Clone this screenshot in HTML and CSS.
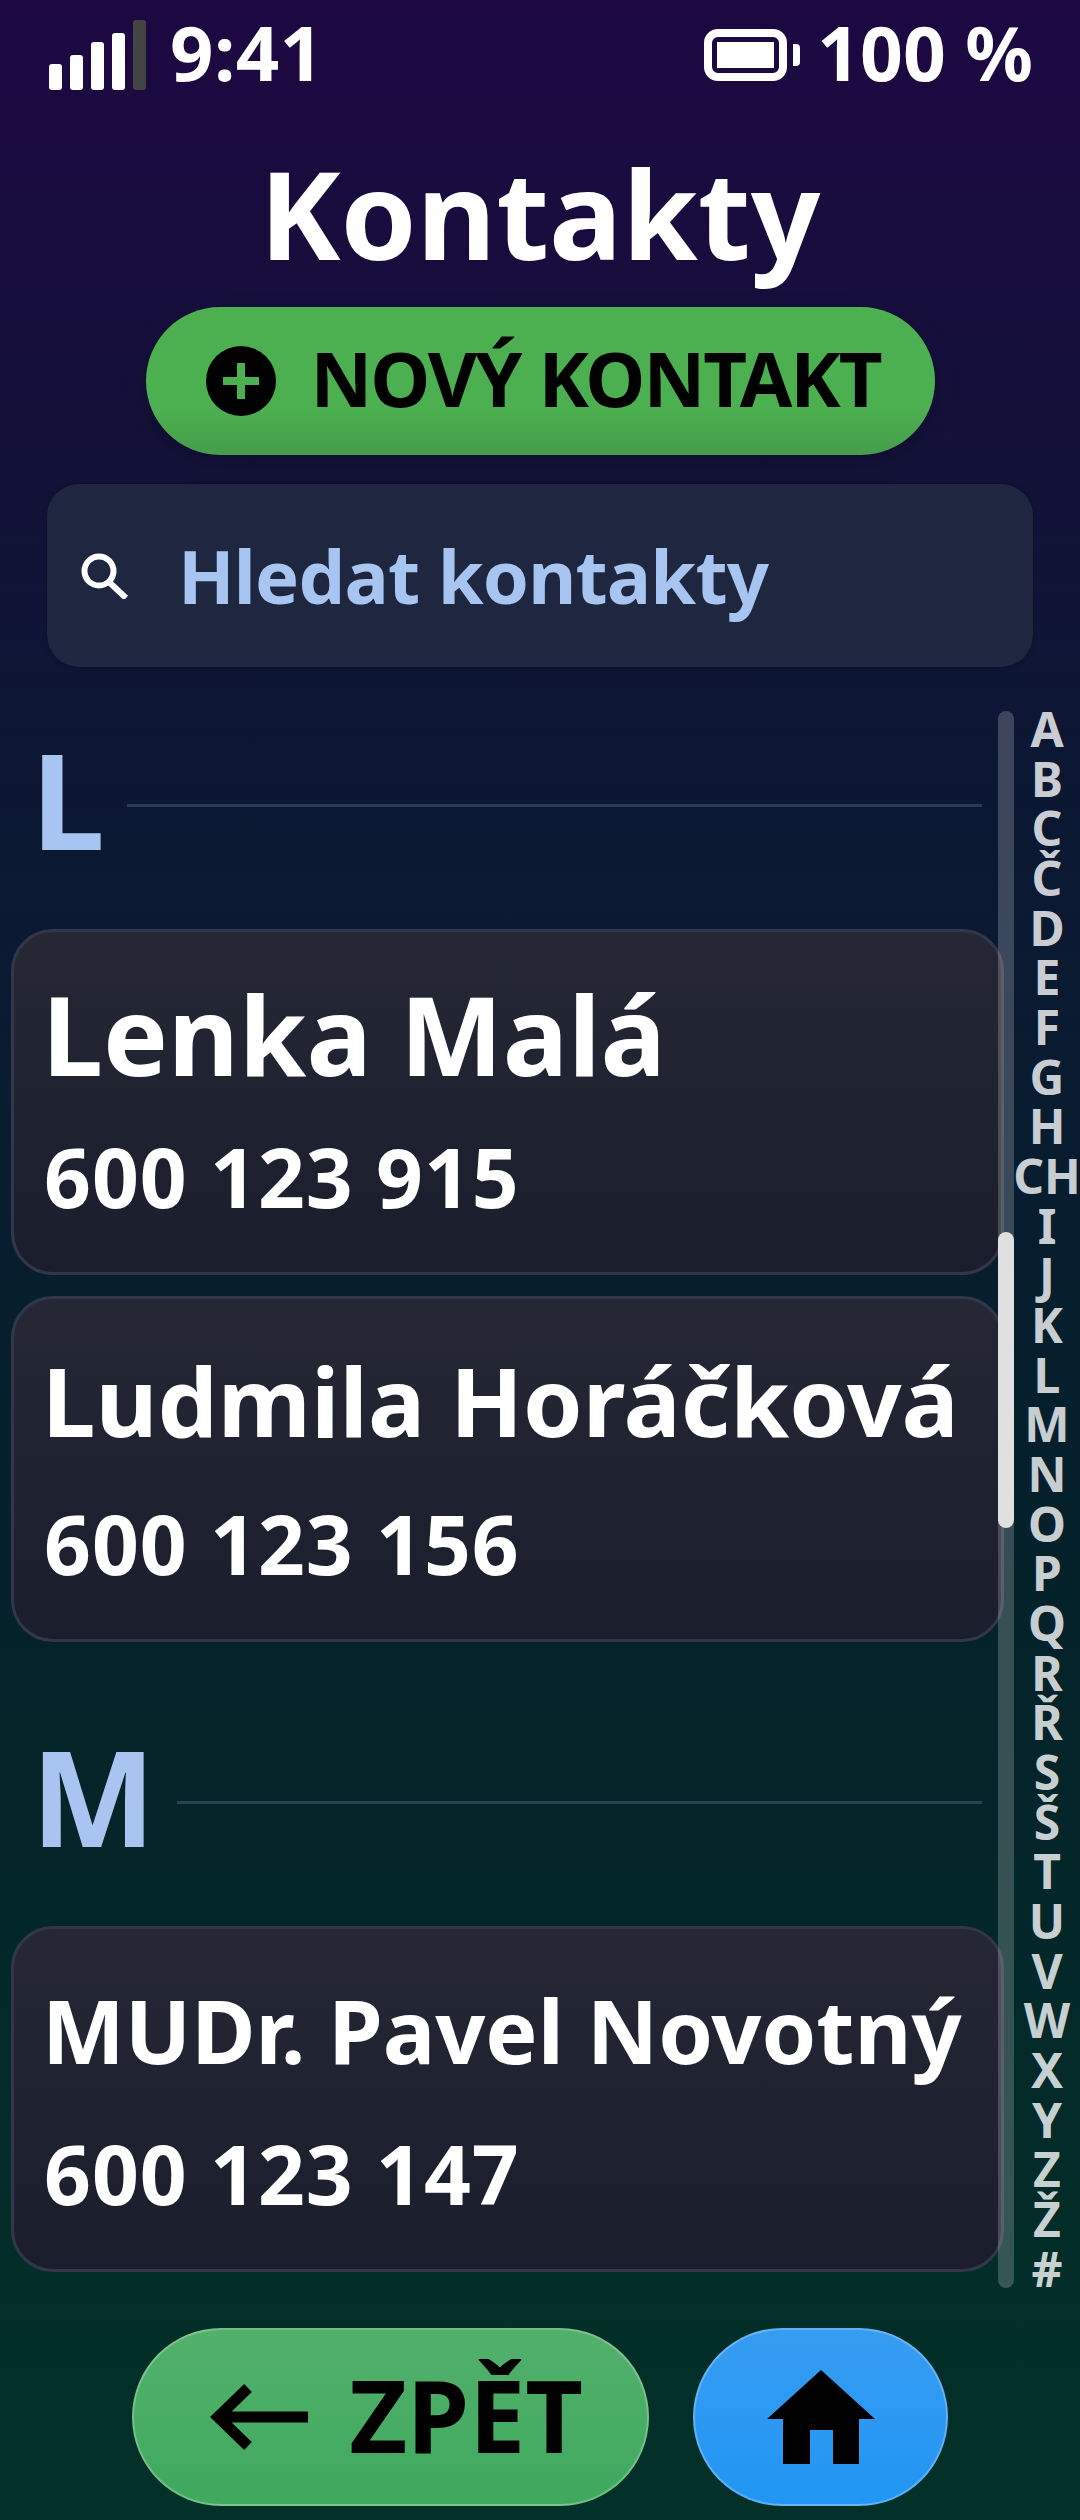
FILE: index.html
```html
<!DOCTYPE html>
<html lang="cs">

<head>
    <meta charset="UTF-8">
    <title>Kontakty</title>
    <link rel="stylesheet" href="styles.css">
</head>

<body>

    <header class="status-bar">
        <div class="status-left">
            <div class="signal">
                <span class="bar bar-1"></span>
                <span class="bar bar-2"></span>
                <span class="bar bar-3"></span>
                <span class="bar bar-4"></span>
                <span class="bar bar-5"></span>
            </div>
            <span class="status-text time">9:41</span>
        </div>
        <div class="status-right">
            <svg class="battery" width="96" height="52" viewBox="0 0 96 52">
                <rect x="4" y="4" width="75" height="44" rx="10" fill="none" stroke="#fff" stroke-width="8" />
                <rect x="13" y="13" width="57" height="26" fill="#fff" />
                <path d="M89 15h3a4 4 0 0 1 4 4v14a4 4 0 0 1-4 4h-3z" fill="#fff" />
            </svg>
            <span class="status-text">100 %</span>
        </div>
    </header>

    <h1 class="title">Kontakty</h1>

    <button class="new-contact">
        <svg width="70" height="70" viewBox="0 0 70 70">
            <circle cx="35" cy="35" r="35" fill="#000" />
            <path d="M35 17v36M17 35h36" stroke="#4caf50" stroke-width="8" />
        </svg>
        <span class="new-contact-text">NOVÝ KONTAKT</span>
    </button>

    <div class="search">
        <svg class="search-icon" width="48" height="46" viewBox="0 0 48 46">
            <circle cx="18" cy="18" r="14.5" fill="none" stroke="#fff" stroke-width="6" />
            <path d="M28 29l17 16" stroke="#fff" stroke-width="6" />
        </svg>
        <span class="search-text">Hledat kontakty</span>
    </div>

    <main class="main">
        <div class="list">
            <section class="section">
                <div class="section-head">
                    <span class="section-letter">L</span>
                    <span class="section-line"></span>
                </div>
                <div class="cards">
                    <div class="card">
                        <div class="card-name name-xl">Lenka Malá</div>
                        <div class="card-phone">600 123 915</div>
                    </div>
                    <div class="card">
                        <div class="card-name name-lg">Ludmila Horáčková</div>
                        <div class="card-phone">600 123 156</div>
                    </div>
                </div>
            </section>

            <section class="section">
                <div class="section-head">
                    <span class="section-letter">M</span>
                    <span class="section-line"></span>
                </div>
                <div class="cards">
                    <div class="card">
                        <div class="card-name name-md">MUDr. Pavel Novotný</div>
                        <div class="card-phone">600 123 147</div>
                    </div>
                </div>
            </section>
        </div>

        <div class="scroll-track">
            <div class="scroll-thumb"></div>
        </div>

        <nav class="alphabet">
            <span>A</span><span>B</span><span>C</span><span>Č</span><span>D</span><span>E</span><span>F</span><span>G</span>
            <span>H</span><span>CH</span><span>I</span><span>J</span><span>K</span><span>L</span><span>M</span><span>N</span>
            <span>O</span><span>P</span><span>Q</span><span>R</span><span>Ř</span><span>S</span><span>Š</span><span>T</span>
            <span>U</span><span>V</span><span>W</span><span>X</span><span>Y</span><span>Z</span><span>Ž</span><span>#</span>
        </nav>
    </main>

    <footer class="footer">
        <button class="nav-btn back">
            <svg width="98" height="66" viewBox="0 0 98 66">
                <path d="M98 33H8M38 4L8 33l30 29" fill="none" stroke="#000" stroke-width="11" />
            </svg>
            <span class="back-text">ZPĚT</span>
        </button>
        <button class="nav-btn home">
            <svg width="108" height="94" viewBox="0 0 108 94">
                <path d="M54 0l54 49H92v45H66V60H43v34H16V49H0z" fill="#000" />
            </svg>
        </button>
    </footer>

</body>

</html>
```

FILE: styles.css
```css
* {
    box-sizing: border-box;
}

html,
body {
    margin: 0;
    padding: 0;
}

body {
    width: 1080px;
    height: 2520px;
    overflow: hidden;
    display: flex;
    flex-direction: column;
    font-family: "Noto Sans", Arial, sans-serif;
    font-weight: 700;
    color: #fff;
    background: linear-gradient(180deg, #1d0842 0%, #0c1733 30%, #04212a 62%, #023128 100%);
}

button {
    font-family: inherit;
    font-weight: 700;
    color: #000;
    border: none;
    padding: 0;
}

/* status bar */
.status-bar {
    height: 110px;
    flex-shrink: 0;
    padding: 0 47px 0 49px;
    display: flex;
    justify-content: space-between;
    align-items: center;
}

.status-left,
.status-right {
    display: flex;
    align-items: center;
}

.status-left {
    gap: 24px;
}

.status-right {
    gap: 17px;
}

.status-text {
    font-size: 75px;
    line-height: 104px;
    padding-bottom: 6px;
}

.time {
    font-size: 76px;
    letter-spacing: 0.5px;
}

.signal {
    display: flex;
    align-items: flex-end;
    gap: 8px;
    height: 70px;
}

.bar {
    width: 13px;
    border-radius: 3px;
    background: #fff;
}

.bar-1 {
    height: 26px;
}

.bar-2 {
    height: 35px;
}

.bar-3 {
    height: 48px;
}

.bar-4 {
    height: 57px;
}

.bar-5 {
    height: 70px;
    background: #444;
}

/* title + actions */
.title {
    margin: 18px 0 9px;
    font-size: 122px;
    line-height: 170px;
    text-align: center;
}

.new-contact {
    align-self: center;
    width: 789px;
    height: 148px;
    flex-shrink: 0;
    padding-left: 60px;
    display: flex;
    align-items: center;
    gap: 35px;
    font-size: 76px;
    letter-spacing: -2px;
    border-radius: 74px;
    background: linear-gradient(180deg, #4caf50 0%, #4caf50 70%, #459c4b 100%);
    box-shadow: 0 8px 24px rgba(0, 0, 0, 0.2);
}

.new-contact-text {
    margin-bottom: 8px;
}

.search {
    margin: 29px 47px 0;
    height: 183px;
    flex-shrink: 0;
    padding-left: 34px;
    display: flex;
    align-items: center;
    gap: 49px;
    border-radius: 32px;
    background: #1e2640;
    box-shadow: 0 0 4px rgba(0, 0, 0, 0.35);
}

.search-text {
    font-size: 74px;
    letter-spacing: -0.8px;
    color: #a8c4f0;
}

/* list */
.main {
    position: relative;
    margin-top: 44px;
    flex: 1;
    min-height: 0;
    display: flex;
}

.list {
    width: 1004px;
    padding: 2px 0 0 11px;
}

.section + .section {
    margin-top: 68px;
}

.section-head {
    height: 180px;
    margin-bottom: 36px;
    padding-left: 20px;
    padding-right: 22px;
    display: flex;
    align-items: center;
    gap: 22px;
}

.section-letter {
    font-size: 132px;
    line-height: 164px;
    margin-bottom: 8px;
    color: #a8c4f0;
}

.section-line {
    flex: 1;
    height: 3px;
    margin-top: 4px;
    background: rgba(168, 196, 240, 0.2);
}

.cards {
    display: flex;
    flex-direction: column;
    gap: 21px;
}

.card {
    height: 346px;
    padding: 26px 20px 0 28px;
    border: 3px solid #33364a;
    border-radius: 42px;
    background: linear-gradient(180deg, #252735 0%, #1a1d2b 100%);
}

.card-name {
    height: 150px;
    display: flex;
    align-items: center;
    white-space: nowrap;
}

.name-xl {
    font-size: 109px;
}

.name-lg {
    font-size: 95.5px;
}

.name-md {
    font-size: 87.8px;
}

.card-phone {
    margin-top: 18px;
    margin-left: 2px;
    font-size: 82px;
    letter-spacing: 1px;
    line-height: 100px;
}

/* scrollbar over the list edge */
.scroll-track {
    position: absolute;
    left: 998px;
    top: 0;
    bottom: 2px;
    width: 16px;
    border-radius: 8px;
    background: rgba(255, 255, 255, 0.2);
}

.scroll-thumb {
    position: absolute;
    left: 0;
    right: 0;
    top: 521px;
    height: 296px;
    border-radius: 8px;
    background: #e0e0e0;
}

.alphabet {
    width: 62px;
    margin-left: 12px;
    padding-bottom: 3px;
    display: flex;
    flex-direction: column;
    justify-content: space-between;
    align-items: center;
    font-size: 48px;
    line-height: 36px;
    color: rgba(255, 255, 255, 0.8);
}

/* bottom navigation */
.footer {
    height: 230px;
    flex-shrink: 0;
    padding-top: 38px;
    padding-bottom: 14px;
    display: flex;
    justify-content: center;
    gap: 44px;
}

.nav-btn {
    height: 178px;
    border-radius: 89px;
    border: 2px solid rgba(255, 255, 255, 0.25);
    display: flex;
    align-items: center;
    justify-content: center;
}

.back {
    width: 517px;
    padding-left: 12px;
    gap: 41px;
    font-size: 100px;
    background: linear-gradient(180deg, #52b06c 0%, #3fa95e 100%);
}

.back-text {
    margin-bottom: 6px;
}

.home {
    width: 255px;
    background: linear-gradient(180deg, #369cf2 0%, #2196f3 100%);
}
```
